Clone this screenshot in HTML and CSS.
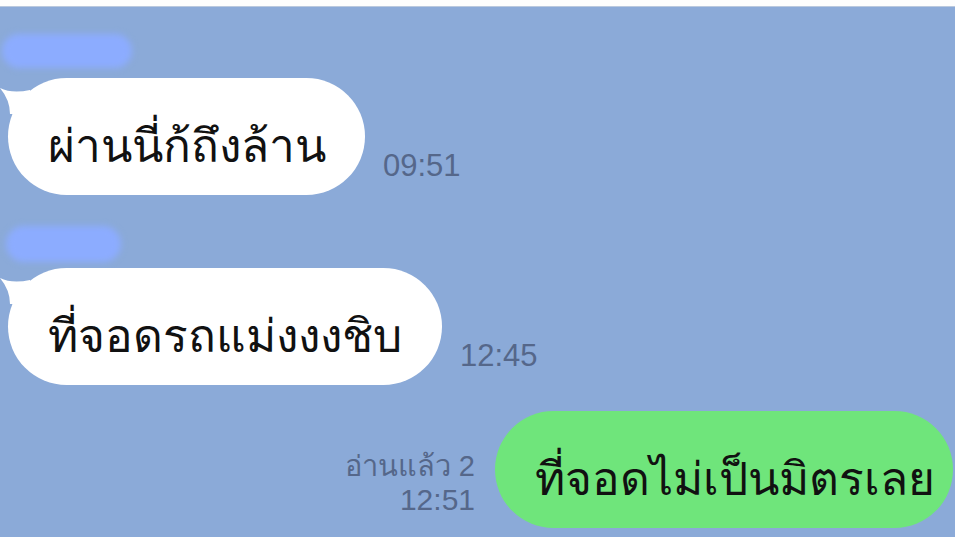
FILE: index.html
```html
<!DOCTYPE html>
<html lang="th">
<head>
    <meta charset="UTF-8">
    <title>Chat</title>
    <link rel="stylesheet" href="styles.css">
</head>
<body>
    <div class="top-strip"></div>

    <main class="chat">
        <!-- incoming 1 -->
        <div class="name-blur name-1"></div>
        <div class="msg-row in">
            <div class="bubble white">
                <svg class="tail" width="34" height="34" viewBox="0 0 34 34"><path d="M0 8 Q12 14 30 10 L34 34 L10 34 Q10 20 0 8 Z" fill="#fff"/></svg>
                <span class="text">ผ่านนี่ก้ถึงล้าน</span>
            </div>
            <div class="meta">09:51</div>
        </div>

        <!-- incoming 2 -->
        <div class="name-blur name-2"></div>
        <div class="msg-row in">
            <div class="bubble white wide">
                <svg class="tail" width="34" height="34" viewBox="0 0 34 34"><path d="M0 8 Q12 14 30 10 L34 34 L10 34 Q10 20 0 8 Z" fill="#fff"/></svg>
                <span class="text">ที่จอดรถแม่งงงชิบ</span>
            </div>
            <div class="meta">12:45</div>
        </div>

        <!-- outgoing -->
        <div class="msg-row out">
            <div class="meta right">
                <div class="read">อ่านแล้ว 2</div>
                <div>12:51</div>
            </div>
            <div class="bubble green">
                <span class="text">ที่จอดไม่เป็นมิตรเลย</span>
            </div>
        </div>
    </main>
</body>
</html>
```

FILE: styles.css
```css
/* Reset */
* {
    margin: 0;
    padding: 0;
    box-sizing: border-box;
}

body {
    background-color: #8baad8;
    font-family: "Noto Sans", "Liberation Sans", sans-serif;
    overflow: hidden;
    height: 537px;
}

.top-strip {
    height: 7px;
    background-color: #fdfdfd;
    border-bottom: 1px solid #b9c8de;
}

.chat {
    display: flex;
    flex-direction: column;
}

/* blurred sender names */
.name-blur {
    background-color: #8cacff;
    border-radius: 20px;
    filter: blur(3px);
}

.name-1 {
    width: 130px;
    height: 34px;
    margin-top: 27px;
    margin-left: 2px;
}

.name-2 {
    width: 115px;
    height: 36px;
    margin-top: 31px;
    margin-left: 6px;
}

.msg-row {
    display: flex;
    align-items: flex-end;
}

.msg-row.in {
    margin-top: 10px;
    padding-left: 8px;
}

.name-2 + .msg-row {
    margin-top: 6px;
}

.msg-row.out {
    margin-top: 26px;
    justify-content: flex-end;
    padding-right: 2px;
}

.bubble {
    position: relative;
    height: 117px;
    border-radius: 59px;
    display: flex;
    align-items: center;
    padding: 0 40px 0 40px;
}

.bubble.white {
    background-color: #ffffff;
    width: 357px;
}

.bubble.white.wide {
    width: 434px;
}

.bubble.green {
    background-color: #6fe57b;
    width: 458px;
    padding-left: 40px;
}

.tail {
    position: absolute;
    left: -8px;
    top: 2px;
}

.text {
    position: relative;
    font-size: 46px;
    color: #111111;
    white-space: nowrap;
    padding-top: 18px;
}

.meta {
    font-family: "Liberation Sans", Arial, sans-serif;
    font-size: 31px;
    color: #55678a;
    margin-left: 18px;
    margin-bottom: 11px;
}

.meta.right {
    text-align: right;
    margin-left: 0;
    margin-right: 20px;
    margin-bottom: 12px;
    font-size: 30px;
    line-height: 33px;
}

.meta .read {
    font-size: 29px;
}
```
